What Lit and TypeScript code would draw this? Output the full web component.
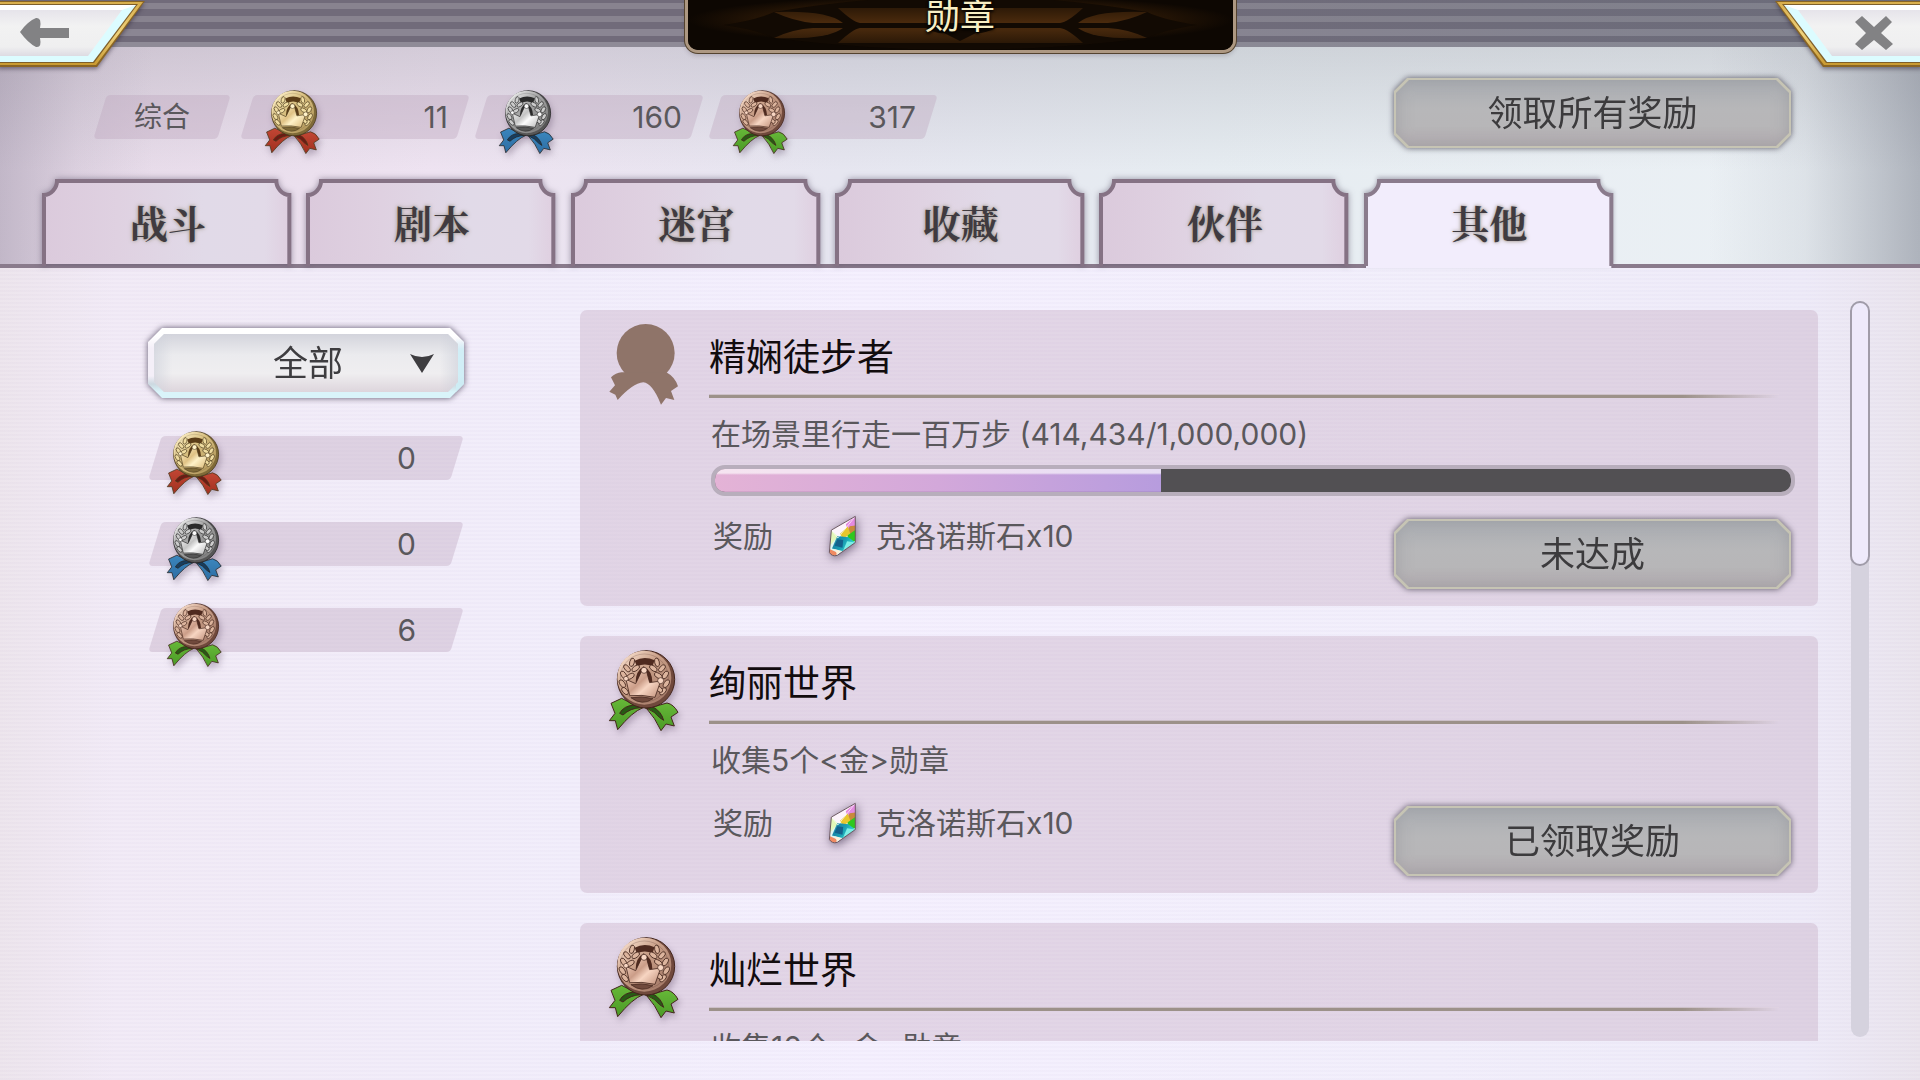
import { LitElement, html, svg, css, nothing } from "lit";
import { customElement, property, state } from "lit/decorators.js";
import { classMap } from "lit/directives/class-map.js";

type Metal = "gold" | "silver" | "bronze" | "locked";

interface Achievement {
  title: string;
  text: string;
  metal: Metal;
  value?: number;
  max?: number;
  reward: string;
  action: string;
}

const PALETTES: Record<string, Record<string, string>> = {
  gold: { hi: "#fff3cd", face: "#d8bf80", low: "#b0955a", rim: "#7f6a38", leaf: "#efdca0", dark: "#5b3d18", line: "#4a3a1c", crown: "#fff2c8", crownLow: "#e0c285", ribbon: "#c24634", ribbonLow: "#a1301f", fold: "#6d1a14" },
  silver: { hi: "#f4f4f4", face: "#a6a6a6", low: "#7c7c7c", rim: "#565656", leaf: "#cccccc", dark: "#2b2b2b", line: "#262626", crown: "#fbfbfb", crownLow: "#c4c4c4", ribbon: "#3b86bd", ribbonLow: "#2d6da3", fold: "#173d5e" },
  bronze: { hi: "#fbe2d0", face: "#c99f88", low: "#a27766", rim: "#70493c", leaf: "#dcb49d", dark: "#4f2a1f", line: "#43251c", crown: "#f7d5c2", crownLow: "#cb9d88", ribbon: "#66b838", ribbonLow: "#4b9a26", fold: "#275a14" },
};

const RIBBON_LEFT = "M34 189 L66 174 L112 198 L130 202 Q98 214 54 268 L47 241 L29 241 L46 219 Z";
const RIBBON_RIGHT = "M136 202 L160 200 L202 188 Q222 192 235 216 L214 230 L224 257 L199 251 L184 271 Q166 232 142 206 Z";

@customElement("medal-icon")
export class MedalIcon extends LitElement {
  @property() metal: Metal = "gold";

  static styles = css`
    :host { display: block; flex: none; }
    .medal { display: block; width: 100%; height: 100%; overflow: visible; }
    .lit { filter: drop-shadow(2px 4px 3px rgba(70, 50, 80, 0.3)); }
  `;

  private leaf(x: number, y: number, angle: number, fill: string, line: string) {
    return svg`<ellipse cx=${x} cy=${y} rx="7" ry="13" transform=${`rotate(${angle} ${x} ${y})`} fill=${fill} stroke=${line} stroke-width="2.4"></ellipse>`;
  }

  render() {
    if (this.metal === "locked") {
      return html`<svg class="medal" viewBox="28 29 210 243" aria-hidden="true">
        <g fill="#8f7469">
          <circle cx="138" cy="116" r="87"></circle>
          <path d="M34 189 Q48 176 66 174 H200 Q226 188 235 216 L214 230 L224 257 L199 251 L184 271 Q158 206 131 204 Q98 208 54 257 L47 241 L29 232 L46 213 Z"></path>
        </g>
      </svg>`;
    }
    const p = PALETTES[this.metal];
    const leaves: [number, number, number][] = [
      [97, 66, 16], [82, 84, -42], [108, 84, 56], [72, 104, -32], [92, 108, 60], [68, 130, -34], [76, 152, -42],
      [172, 66, -12], [187, 84, 42], [161, 84, -56], [197, 104, 32], [176, 106, -60], [200, 130, 32], [190, 153, 42], [178, 146, -50],
    ];
    return html`<svg class="medal lit" viewBox="28 29 210 243" aria-hidden="true">
      <defs>
        <linearGradient id="face" x1="0.1" y1="0.05" x2="0.9" y2="0.95">
          <stop offset="0" stop-color=${p.hi}></stop><stop offset="0.4" stop-color=${p.face}></stop><stop offset="1" stop-color=${p.low}></stop>
        </linearGradient>
        <linearGradient id="crown" x1="0" y1="0" x2="1" y2="0.8">
          <stop offset="0" stop-color=${p.crown}></stop><stop offset="0.45" stop-color=${p.crownLow}></stop>
          <stop offset="0.65" stop-color=${p.crown}></stop><stop offset="1" stop-color=${p.crownLow}></stop>
        </linearGradient>
        <linearGradient id="ribbon" x1="0" y1="0" x2="0" y2="1">
          <stop offset="0" stop-color=${p.ribbon}></stop><stop offset="1" stop-color=${p.ribbonLow}></stop>
        </linearGradient>
      </defs>
      <g stroke=${p.line} stroke-width="3" stroke-linejoin="round">
        <path d=${RIBBON_LEFT} fill="url(#ribbon)"></path>
        <path d=${RIBBON_RIGHT} fill="url(#ribbon)"></path>
        <path d="M60 219 Q72 196 104 194 L124 202 Q92 203 70 224 Z" fill=${p.fold}></path>
        <path d="M142 204 L160 200 Q184 212 192 240 L180 232 Q166 214 142 204 Z" fill=${p.fold}></path>
        <circle cx="139" cy="117" r="86" fill=${p.rim}></circle>
      </g>
      <circle cx="134" cy="112" r="81" fill="url(#face)"></circle>
      <circle cx="134" cy="113" r="72" fill="none" stroke=${p.line} stroke-opacity="0.3" stroke-width="2"></circle>
      <path d="M105 61 Q134 45 165 60 L158 78 Q134 66 112 79 Z" fill=${p.dark}></path>
      <path d="M108 126 Q108 92 132 78 Q158 92 158 126 Z" fill=${p.dark}></path>
      ${leaves.map(([x, y, a]) => this.leaf(x, y, a, p.leaf, p.line))}
      <path d="M94 172 Q128 166 160 175 Q128 198 94 172 Z" fill=${p.rim} stroke=${p.line} stroke-width="2"></path>
      <path d="M90 166 L79 117 L108 130 L125 94 H141 L150 127 L183 122 L166 171 Q126 162 90 166 Z" fill="url(#crown)" stroke=${p.line} stroke-width="2.4" stroke-linejoin="round"></path>
      <g fill=${p.crown} stroke=${p.line} stroke-width="2">
        <circle cx="133" cy="90" r="9"></circle><circle cx="79" cy="115" r="7"></circle><circle cx="183" cy="121" r="9"></circle>
      </g>
    </svg>`;
  }
}

@customElement("gem-icon")
export class GemIcon extends LitElement {
  static styles = css`
    :host { display: block; flex: none; }
    .gem { display: block; width: 100%; height: 100%; overflow: visible; filter: drop-shadow(1px 2px 5px rgba(50, 35, 65, 0.6)); }
  `;

  render() {
    return html`<svg class="gem" viewBox="684 622 88 128" aria-hidden="true">
      <defs>
        <linearGradient id="low" x1="0" y1="0" x2="1" y2="0.4">
          <stop offset="0" stop-color="#b4ecc0"></stop><stop offset="0.3" stop-color="#1787a8"></stop><stop offset="0.6" stop-color="#1aa0b4"></stop><stop offset="1" stop-color="#34e0d2"></stop>
        </linearGradient>
      </defs>
      <path d="M767 626 L694 668 L688 736 Q696 750 712 745 L767 706 Z" fill="#dff6f2"></path>
      <path d="M767 626 L694 668 L714 692 L742 660 Z" fill="#fdf4fb"></path>
      <path d="M767 626 L738 650 L742 664 L767 672 Z" fill="#e48ae0"></path>
      <path d="M767 654 L750 656 L740 676 L767 690 Z" fill="#c98a3a"></path>
      <path d="M744 656 L720 680 L730 694 L752 680 Z" fill="#e8c62e"></path>
      <path d="M767 668 L744 684 L742 702 L767 702 Z" fill="#2fc81f"></path>
      <path d="M694 668 L690 716 L708 694 L716 690 Z" fill="#e3f7b8"></path>
      <path d="M712 686 L746 690 L767 706 L728 732 L696 724 Z" fill="url(#low)"></path>
      <path d="M712 696 L730 698 L728 722 L704 716 Z" fill="#14618c"></path>
      <path d="M742 702 L767 706 L730 730 Z" fill="#7ceee6"></path>
      <path d="M690 726 L712 736 L708 746 Q692 746 688 736 Z" fill="#f08a62"></path>
      <path d="M704 726 L722 732 L712 743 Z" fill="#fdf0d8"></path>
      <path d="M694 668 L714 692 L767 626" fill="none" stroke="#ffffff" stroke-width="2"></path>
      <path d="M767 626 L694 668 L688 736 Q696 750 712 745 L767 706 Z" fill="none" stroke="#6b5560" stroke-width="3" stroke-linejoin="round"></path>
    </svg>`;
  }
}

@customElement("app-root")
export class AppRoot extends LitElement {
  @state() private tab = "其他";

  private tabs = ["战斗", "剧本", "迷宫", "收藏", "伙伴", "其他"];

  private totals: { metal: Metal; count: number }[] = [
    { metal: "gold", count: 11 },
    { metal: "silver", count: 160 },
    { metal: "bronze", count: 317 },
  ];

  private counts: { metal: Metal; count: number }[] = [
    { metal: "gold", count: 0 },
    { metal: "silver", count: 0 },
    { metal: "bronze", count: 6 },
  ];

  private items: Achievement[] = [
    { title: "精娴徒步者", text: "在场景里行走一百万步 (414,434/1,000,000)", metal: "locked", value: 414434, max: 1000000, reward: "克洛诺斯石x10", action: "未达成" },
    { title: "绚丽世界", text: "收集5个<金>勋章", metal: "bronze", reward: "克洛诺斯石x10", action: "已领取奖励" },
    { title: "灿烂世界", text: "收集10个<金>勋章", metal: "bronze", reward: "克洛诺斯石x10", action: "已领取奖励" },
  ];

  static styles = css`
    :host {
      display: flex;
      flex-direction: column;
      height: 100vh;
      overflow: hidden;
      box-sizing: border-box;
      font-family: Inter, "Noto Sans CJK SC", sans-serif;
      font-size: 30px;
      color: #5a585c;
      background:
        linear-gradient(90deg, rgba(120, 112, 135, 0.32), rgba(120, 112, 135, 0.1) 4%, transparent 8%, transparent 89%, rgba(120, 125, 140, 0.12) 94%, rgba(100, 105, 120, 0.46)) 0 0 / 100% 268px no-repeat,
        linear-gradient(180deg, rgba(130, 130, 140, 0.24) 47px, transparent 170px),
        linear-gradient(97deg, #e4d8e6 0%, #eee3f1 22%, #e6e6f0 42%, #e6ecf1 60%, #edf2f6 100%);
    }
    * { box-sizing: border-box; }
    button, select { font: inherit; color: inherit; margin: 0; border: 0; background: none; }

    .bar {
      flex: none;
      height: 47px;
      display: grid;
      grid-template-columns: 1fr auto 1fr;
      align-items: start;
      background:
        linear-gradient(90deg, transparent 40%, rgba(90, 115, 125, 0.2)),
        linear-gradient(180deg, #716b7a 3px, #88838f 3px 9px, #716b7a 9px 16px, #88838f 16px 22px, #716b7a 22px 29px, #8b8693 29px 36px, #716b7a 36px 42px, #8f8b97 42px);
      position: relative;
      z-index: 1;
    }
    .corner { width: 145px; height: 68px; padding: 0; cursor: pointer; }
    .corner svg { display: block; overflow: visible; filter: drop-shadow(0 2px 2px rgba(40, 30, 50, 0.5)); }
    .close { justify-self: end; }
    .plate {
      width: 551px;
      height: 53px;
      position: relative;
      overflow: hidden;
      border: 3px solid #ad9882;
      border-top: 0;
      border-radius: 0 0 13px 13px;
      background: #0d0702;
      box-shadow: 0 0 0 1px #54432f, 0 3px 4px rgba(60, 50, 60, 0.2);
    }
    .plate svg { position: absolute; inset: 0; width: 100%; height: 100%; }
    .plate h1 {
      position: relative;
      margin: 0;
      text-align: center;
      font-size: 35px;
      line-height: 32px;
      font-weight: 400;
      color: #f8efc4;
      text-shadow: 0 2px 3px #000, 0 0 3px #000;
    }

    .summary {
      flex: none;
      display: flex;
      justify-content: space-between;
      align-items: center;
      padding: 31px 129px 31px 93px;
    }
    .totals { display: flex; gap: 4px; padding-top: 8px; }
    .pill {
      position: relative;
      display: flex;
      align-items: center;
      justify-content: space-between;
      width: 230px;
      height: 44px;
      padding: 0 22px 0 25px;
      line-height: 44px;
      isolation: isolate;
    }
    .pill::before {
      content: "";
      position: absolute;
      z-index: -1;
      inset: 0 7px;
      border-radius: 4px;
      background: rgba(190, 165, 190, 0.38);
      transform: skewX(-17deg);
    }
    .pill medal-icon { width: 55px; height: 64px; margin: -5px 0 -15px; }
    .pill.label { width: 138px; margin-right: 5px; padding: 0; justify-content: center; font-size: 28px; }
    .pill.wide { width: auto; padding: 0 48px 0 19px; }

    .stone {
      position: relative;
      isolation: isolate;
      width: 397px;
      height: 70px;
      flex: none;
      padding: 0;
      font-size: 35px;
      line-height: 70px;
      color: #3c3b3d;
      cursor: pointer;
      filter: drop-shadow(0 0 3px rgba(50, 45, 60, 0.75));
    }
    .stone::before, .stone::after {
      content: "";
      position: absolute;
      z-index: -1;
      inset: 0;
      clip-path: polygon(13px 0, calc(100% - 13px) 0, 100% 13px, 100% calc(100% - 13px), calc(100% - 13px) 100%, 13px 100%, 0 calc(100% - 13px), 0 13px);
      background: #c6c4b4;
    }
    .stone::after { inset: 2px; background: linear-gradient(180deg, #abaeb3, #b7b7b9 45%, #b7b6b8 70%, #b3adb1); box-shadow: inset 0 0 16px rgba(140, 140, 145, 0.5); }

    .tabs {
      flex: none;
      display: grid;
      grid-template-columns: repeat(6, 1fr);
      column-gap: 15px;
      height: 89px;
      padding: 0 307px 0 42px;
      background: linear-gradient(#8a7b8c, #8a7b8c) 0 100% / 100% 4px no-repeat;
    }
    .tab {
      position: relative;
      isolation: isolate;
      padding: 0 0 4px 2px;
      font-family: "Noto Serif CJK SC", "Noto Serif SC", "Noto Sans CJK SC", serif;
      font-size: 38px;
      line-height: 85px;
      font-weight: 700;
      color: #403b40;
      text-shadow: 0 0 3px #a79f98, 0 0 5px #b8b0a8;
      cursor: pointer;
    }
    .tab svg { position: absolute; z-index: -1; inset: 0; width: 100%; height: 100%; overflow: visible; filter: drop-shadow(0 0 3px rgba(70, 60, 85, 0.5)); }
    .tab.on svg { filter: drop-shadow(0 -2px 2px rgba(70, 60, 85, 0.35)); }

    .body {
      flex: 1;
      min-height: 0;
      display: grid;
      grid-template-columns: 316px 1fr 20px;
      padding: 0 50px 0 148px;
      background:
        repeating-linear-gradient(180deg, rgba(255, 255, 255, 0.06) 0 2px, rgba(200, 190, 215, 0.06) 2px 4px),
        linear-gradient(90deg, #ece4ec, #f1eaf6 6%, #f1edfb 30%, #f4effe 45%, #f1eefb 75%, #edeaf8 94%, #e9e3ec);
    }
    .side { padding-top: 60px; }
    .picker {
      position: relative;
      isolation: isolate;
      display: block;
      height: 70px;
      margin-bottom: 38px;
      color: #3e3d40;
      filter: drop-shadow(0 0 3px rgba(60, 50, 75, 0.8));
    }
    .picker::before, .picker::after {
      content: "";
      position: absolute;
      z-index: -1;
      inset: 0;
      clip-path: polygon(14px 0, calc(100% - 14px) 0, 100% 14px, 100% calc(100% - 14px), calc(100% - 14px) 100%, 14px 100%, 0 calc(100% - 14px), 0 14px);
      background:
        linear-gradient(180deg, transparent 10px, rgba(205, 238, 246, 0.9) 22px) 100% 0 / 8px 100% no-repeat,
        linear-gradient(180deg, #ffffff 0 8px, #f4eff8 20px 48px, #ccd8e0 56px, #d9f4fa 64px);
    }
    .picker::after {
      inset: 6px;
      clip-path: polygon(10px 0, calc(100% - 10px) 0, 100% 10px, 100% calc(100% - 10px), calc(100% - 10px) 100%, 10px 100%, 0 calc(100% - 10px), 0 10px);
      background:
        linear-gradient(90deg, rgba(205, 208, 218, 0.6), transparent 6%, transparent 94%, rgba(205, 208, 218, 0.6)),
        linear-gradient(180deg, #d3d4dc, #ebebee 36%, #efeef0 68%, #ddd5dc);
    }
    .picker select {
      width: 100%;
      height: 70px;
      padding: 0 0 0 4px;
      appearance: none;
      outline: none;
      text-align: center;
      text-align-last: center;
      font-size: 35px;
      cursor: pointer;
    }
    .arrow { position: absolute; right: 30px; top: 26px; width: 24px; height: 19px; pointer-events: none; }
    .counts { display: flex; flex-direction: column; gap: 42px; }

    .list {
      margin: 42px 32px 39px 116px;
      overflow-y: auto;
      scrollbar-width: none;
      display: flex;
      flex-direction: column;
      gap: 30px;
    }
    .card {
      flex: none;
      display: grid;
      grid-template-columns: 70px 1fr;
      column-gap: 30px;
      padding: 14px 27px 17px 29px;
      border-radius: 7px;
      background: rgba(190, 160, 185, 0.32);
    }
    .card medal-icon { width: 70px; height: 81px; }
    .card h2 {
      margin: 10px 0 12px;
      font-size: 37px;
      line-height: 48px;
      font-weight: 400;
      color: #120c0e;
    }
    .rule { height: 4px; margin-right: 12px; background: linear-gradient(90deg, #9c9189 91%, transparent); border-top: 1px solid rgba(225, 212, 226, 0.7); }
    .card p { margin: 16px 0 0; padding-left: 2px; line-height: 40px; }
    .meter {
      display: block;
      appearance: none;
      width: calc(100% + 2px);
      height: 31px;
      margin: 11px 0 0 2px;
      border: 4px solid #b8aebc;
      border-radius: 14px;
      overflow: hidden;
      background: #525053;
    }
    .meter::-webkit-progress-bar { background: #525053; }
    .meter::-webkit-progress-value {
      background:
        linear-gradient(180deg, rgba(255, 255, 255, 0.65) 0 4px, transparent 6px 22px, rgba(120, 90, 130, 0.3) 23px),
        linear-gradient(90deg, #e4b3d6, #d3a8da 50%, #b79cde);
    }
    .foot { display: flex; justify-content: space-between; align-items: flex-start; margin-top: 26px; }
    .meter + .foot { margin-top: 23px; }
    .reward { display: flex; align-items: center; height: 34px; padding-left: 4px; line-height: 34px; }
    .reward gem-icon { width: 29px; height: 42px; margin: 0 19px 0 55px; }

    .scroll { height: 736px; max-height: calc(100% - 76px); margin-top: 33px; padding: 0 1px; }
    .track { display: flow-root; height: 100%; border-radius: 9px; background: #d5d2de; }
    .thumb { height: 36%; margin: 0 -1px; border: 2px solid #a09ca9; border-radius: 10px; background: #eeeafb; }
  `;

  private cornerShape() {
    return svg`
      <defs>
        <linearGradient id="gold" x1="0" y1="0" x2="0" y2="1"><stop offset="0" stop-color="#d8ae4c"></stop><stop offset="0.5" stop-color="#f0d27c"></stop><stop offset="1" stop-color="#c99a30"></stop></linearGradient>
        <linearGradient id="panel" x1="0" y1="0" x2="0" y2="1"><stop offset="0" stop-color="#e6e4ea"></stop><stop offset="0.35" stop-color="#f2f2f2"></stop><stop offset="0.8" stop-color="#efeff0"></stop><stop offset="1" stop-color="#dddbe2"></stop></linearGradient>
      </defs>
      <path d="M-2 1 H145 L97 67 H-2 Z" fill="#8a6524"></path>
      <path d="M-2 2 H143 L96 65 H-2 Z" fill="url(#gold)"></path>
      <path d="M-2 4 H138 L94 63 H-2 Z" fill="#7f5f2a"></path>
      <path d="M-2 5 H136 L93 62 H-2 Z" fill="#dcfcff"></path>
      <path d="M-2 5 H136 L122 10 H-2 Z" fill="#ffffff"></path>
      <path d="M-2 10 H122 L88 56 H-2 Z" fill="url(#panel)"></path>
    `;
  }

  private tabShape(active: boolean) {
    const outline = "M2 87 V16 C9 16 15 9 15 2 H234 C234 9 240 16 247 16 V87";
    return html`<svg viewBox="0 0 249 89" preserveAspectRatio="none" aria-hidden="true">
      <defs>
        <linearGradient id="tabfill" x1="0" y1="0" x2="1" y2="0">
          <stop offset="0" stop-color="#dbcadc"></stop><stop offset="0.3" stop-color="#dfd1e1"></stop><stop offset="0.65" stop-color="#e1dae8"></stop><stop offset="0.9" stop-color="#e2dae8"></stop><stop offset="1" stop-color="#dfcfe0"></stop>
        </linearGradient>
      </defs>
      <path d=${active ? "M2 89 V16 C9 16 15 9 15 2 H234 C234 9 240 16 247 16 V89 Z" : "M2 85 V16 C9 16 15 9 15 2 H234 C234 9 240 16 247 16 V85 Z"} fill=${active ? "#f2edfc" : "url(#tabfill)"}></path>
      <path d=${outline} fill="none" stroke=${active ? "#8a7b8c" : "#857284"} stroke-width="4"></path>
    </svg>`;
  }

  private card(item: Achievement) {
    return html`<article class="card">
      <medal-icon metal=${item.metal}></medal-icon>
      <div class="info">
        <h2>${item.title}</h2>
        <div class="rule"></div>
        <p>${item.text}</p>
        ${item.max ? html`<progress class="meter" aria-label=${item.title} value=${item.value ?? 0} max=${item.max}></progress>` : nothing}
        <div class="foot">
          <div class="reward"><span>奖励</span><gem-icon></gem-icon><span>${item.reward}</span></div>
          <button class="stone" type="button">${item.action}</button>
        </div>
      </div>
    </article>`;
  }

  render() {
    return html`
      <header class="bar">
        <button class="corner" type="button" aria-label="返回">
          <svg width="145" height="68" viewBox="0 0 145 68">${this.cornerShape()}
            <path d="M20 32 Q28 21 36 18 Q42 17 40 28 H69 V38 H40 Q42 48 36 47 Q28 43 20 32 Z" fill="#828284"></path>
          </svg>
        </button>
        <div class="plate">
          <svg viewBox="0 0 545 50" preserveAspectRatio="none" aria-hidden="true">
            <defs>
              <radialGradient id="glow" cx="0.5" cy="0.4" r="0.5"><stop offset="0" stop-color="#3a230b"></stop><stop offset="0.75" stop-color="#241405"></stop><stop offset="1" stop-color="#0d0702"></stop></radialGradient>
              <linearGradient id="inlay" gradientUnits="userSpaceOnUse" x1="0" y1="0" x2="0" y2="50"><stop offset="0.15" stop-color="#2c1907"></stop><stop offset="0.45" stop-color="#4a2a0d"></stop><stop offset="0.6" stop-color="#46280d"></stop><stop offset="0.85" stop-color="#2c1907"></stop></linearGradient>
            </defs>
            <rect width="545" height="50" fill="url(#glow)"></rect>
            <path d="M36 25 Q70 20 86 12 Q180 -4 272 -4 Q365 -4 459 12 Q475 20 509 25 Q475 30 459 38 Q365 50 272 50 Q180 50 86 38 Q70 30 36 25 Z" fill="#120a03"></path>
            <g fill="url(#inlay)">
              <path d="M150 8 H395 Q380 22 372 23 H172 Q165 22 150 8 Z"></path>
              <path d="M150 43 H395 Q380 29 372 28 H172 Q165 29 150 43 Z"></path>
              <path d="M86 12 Q140 10 155 23 H125 Q105 21 86 12 Z"></path>
              <path d="M86 38 Q140 40 155 28 H125 Q105 29 86 38 Z"></path>
              <path d="M459 12 Q405 10 390 23 H420 Q440 21 459 12 Z"></path>
              <path d="M459 38 Q405 40 390 28 H420 Q440 29 459 38 Z"></path>
            </g>
            <path d="M238 28 H308 Q296 34 288 33 L272 41 L256 33 Q248 34 238 28 Z" fill="#120a03"></path>
          </svg>
          <h1>勋章</h1>
        </div>
        <button class="corner close" type="button" aria-label="关闭">
          <svg width="145" height="68" viewBox="0 0 145 68"><g transform="translate(145 0) scale(-1 1)">${this.cornerShape()}</g>
            <path d="M80 22 L87 16 L99 27 L111 16 L117 22 L106 33 L118 44 L111 50 L99 40 L87 50 L80 44 L91 33 Z" fill="#828284"></path>
          </svg>
        </button>
      </header>

      <section class="summary">
        <div class="totals">
          <div class="pill label">综合</div>
          ${this.totals.map((t) => html`<div class="pill"><medal-icon metal=${t.metal}></medal-icon><span>${t.count}</span></div>`)}
        </div>
        <button class="stone" type="button">领取所有奖励</button>
      </section>

      <nav class="tabs" role="tablist">
        ${this.tabs.map((name) => html`<button
          class=${classMap({ tab: true, on: name === this.tab })}
          type="button"
          role="tab"
          aria-selected=${name === this.tab ? "true" : "false"}
          @click=${() => (this.tab = name)}
        >${this.tabShape(name === this.tab)}${name}</button>`)}
      </nav>

      <main class="body">
        <aside class="side">
          <div class="picker">
            <select aria-label="筛选"><option>全部</option></select>
            <svg class="arrow" viewBox="0 0 24 19" aria-hidden="true"><path d="M0 0 Q12 6 24 0 L12 19 Z" fill="#3e3d40"></path></svg>
          </div>
          <div class="counts">
            ${this.counts.map((c) => html`<div class="pill wide"><medal-icon metal=${c.metal}></medal-icon><span>${c.count}</span></div>`)}
          </div>
        </aside>
        <section class="list">${this.items.map((i) => this.card(i))}</section>
        <div class="scroll" aria-hidden="true"><div class="track"><div class="thumb"></div></div></div>
      </main>
    `;
  }
}
